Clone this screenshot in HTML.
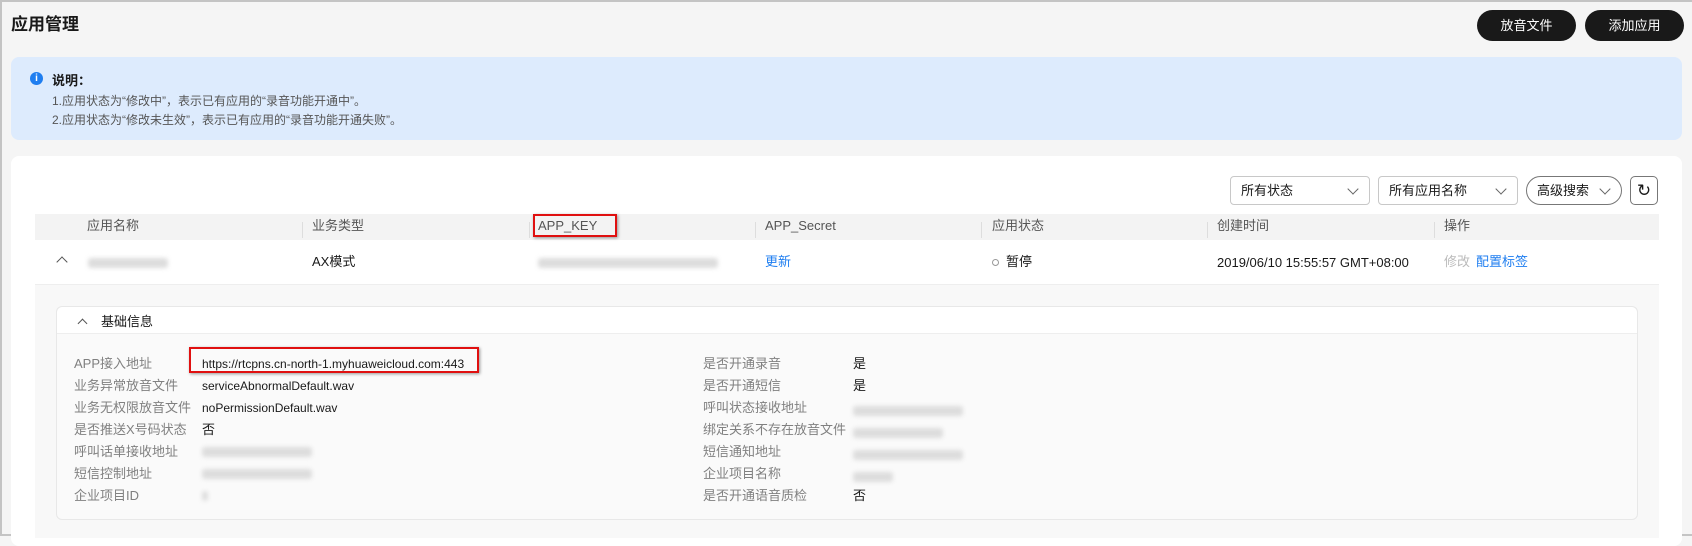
<!DOCTYPE html><html><head><meta charset="utf-8"><style>
*{margin:0;padding:0;box-sizing:border-box}
body{width:1692px;height:536px;overflow:hidden;background:#f5f5f5;font-family:"Liberation Sans","Noto Sans CJK SC",sans-serif;font-size:13px;color:#191919;position:relative;border:2px solid #c4c4c4;border-right:none}
.a{position:absolute;white-space:nowrap}
.btn{background:#191919;color:#fff;border-radius:16px;height:31px;line-height:31px;text-align:center;font-size:13px}
.sel{border:1px solid #c8c8c8;background:#fff;height:29px;line-height:27px;padding-left:10px;border-radius:4px}
.chev{position:absolute;right:12px;top:8px;width:8px;height:8px;border-right:1px solid #666;border-bottom:1px solid #666;transform:rotate(45deg)}
.hd{color:#555}
.sep{position:absolute;top:220px;width:1px;height:16px;background:#ddd}
.blur{background:#ddd;filter:blur(2px);height:10px;position:absolute;border-radius:3px}
.lb{color:#808080}
.lat{font-size:12px}
.red{position:absolute;border:2px solid #e01010;box-shadow:1px 1px 3px rgba(0,0,0,.4)}
</style></head><body>
<div class="a" style="left:9px;top:8px;font-size:17px;font-weight:bold">应用管理</div>
<div class="a btn" style="left:1475px;top:8px;width:99px">放音文件</div>
<div class="a btn" style="left:1583px;top:8px;width:99px">添加应用</div>
<div class="a" style="left:9px;top:55px;width:1671px;height:83px;background:#ddebfd;border-radius:8px"></div>
<div class="a" style="left:28px;top:70px;width:13px;height:13px;border-radius:50%;background:#1f7ef0;color:#fff;font-size:10px;line-height:13px;text-align:center;font-weight:bold">i</div>
<div class="a" style="left:50px;top:68px;font-weight:bold">说明：</div>
<div class="a" style="left:50px;top:90px;color:#555;font-size:12px">1.应用状态为“修改中”，表示已有应用的“录音功能开通中”。</div>
<div class="a" style="left:50px;top:109px;color:#555;font-size:12px">2.应用状态为“修改未生效”，表示已有应用的“录音功能开通失败”。</div>
<div class="a" style="left:9px;top:154px;width:1671px;height:390px;background:#fff;border-radius:8px"></div>
<div class="a sel" style="left:1228px;top:174px;width:140px">所有状态<span class="chev"></span></div>
<div class="a sel" style="left:1376px;top:174px;width:140px">所有应用名称<span class="chev"></span></div>
<div class="a sel" style="left:1524px;top:174px;width:96px;border-radius:15px;border-color:#777">高级搜索<span class="chev"></span></div>
<div class="a" style="left:1628px;top:174px;width:28px;height:29px;border:1px solid #777;border-radius:5px;text-align:center;line-height:27px;font-size:17px">&#8635;</div>
<div class="a" style="left:33px;top:212px;width:1624px;height:26px;background:#f3f3f3"></div>
<div class="a hd" style="left:85px;top:213px">应用名称</div>
<div class="a hd" style="left:310px;top:213px">业务类型</div>
<div class="a hd" style="left:536px;top:216px">APP_KEY</div>
<div class="a hd" style="left:763px;top:216px">APP_Secret</div>
<div class="a hd" style="left:990px;top:213px">应用状态</div>
<div class="a hd" style="left:1215px;top:213px">创建时间</div>
<div class="a hd" style="left:1442px;top:213px">操作</div>
<div class="sep" style="left:300px"></div><div class="sep" style="left:527px"></div><div class="sep" style="left:753px"></div><div class="sep" style="left:979px"></div><div class="sep" style="left:1205px"></div><div class="sep" style="left:1432px"></div>
<div class="red" style="left:531px;top:212px;width:84px;height:23px"></div>
<div class="a" style="left:56px;top:256px;width:8px;height:8px;border-left:1.5px solid #555;border-top:1.5px solid #555;transform:rotate(45deg)"></div>
<div class="blur" style="left:86px;top:256px;width:80px"></div>
<div class="a" style="left:310px;top:249px">AX模式</div>
<div class="blur" style="left:536px;top:256px;width:180px"></div>
<div class="a" style="left:763px;top:249px;color:#1f7ef0">更新</div>
<div class="a" style="left:990px;top:257px;width:7px;height:7px;border:1.5px solid #999;border-radius:50%"></div>
<div class="a" style="left:1004px;top:249px">暂停</div>
<div class="a" style="left:1215px;top:253px">2019/06/10 15:55:57 GMT+08:00</div>
<div class="a" style="left:1442px;top:249px;color:#bbb">修改</div>
<div class="a" style="left:1474px;top:249px;color:#1f7ef0">配置标签</div>
<div class="a" style="left:33px;top:282px;width:1624px;height:1px;background:#eee"></div>
<div class="a" style="left:33px;top:283px;width:1624px;height:253px;background:#f8f8f8"></div>
<div class="a" style="left:54px;top:304px;width:1582px;height:214px;background:#fafafa;border:1px solid #e8e8e8;border-radius:6px"></div>
<div class="a" style="left:55px;top:305px;width:1580px;height:27px;background:#fff;border-bottom:1px solid #eee;border-radius:6px 6px 0 0"></div>
<div class="a" style="left:77px;top:318px;width:7px;height:7px;border-left:1px solid #555;border-top:1px solid #555;transform:rotate(45deg)"></div>
<div class="a" style="left:99px;top:309px">基础信息</div>
<div class="a lb" style="left:72px;top:351px;line-height:22px">APP接入地址<br>业务异常放音文件<br>业务无权限放音文件<br>是否推送X号码状态<br>呼叫话单接收地址<br>短信控制地址<br>企业项目ID</div>
<div class="a lat" style="left:200px;top:351px;line-height:22px">https://rtcpns.cn-north-1.myhuaweicloud.com:443<br>serviceAbnormalDefault.wav<br>noPermissionDefault.wav<br><span style="font-size:13px">否</span></div>
<div class="blur" style="left:200px;top:445px;width:110px"></div>
<div class="blur" style="left:200px;top:467px;width:110px"></div>
<div class="blur" style="left:200px;top:489px;width:6px"></div>
<div class="red" style="left:187px;top:345px;width:290px;height:26px"></div>
<div class="a lb" style="left:701px;top:351px;line-height:22px">是否开通录音<br>是否开通短信<br>呼叫状态接收地址<br>绑定关系不存在放音文件<br>短信通知地址<br>企业项目名称<br>是否开通语音质检</div>
<div class="a" style="left:851px;top:351px;line-height:22px">是<br>是</div>
<div class="blur" style="left:851px;top:404px;width:110px"></div>
<div class="blur" style="left:851px;top:426px;width:90px"></div>
<div class="blur" style="left:851px;top:448px;width:110px"></div>
<div class="blur" style="left:851px;top:470px;width:40px"></div>
<div class="a" style="left:851px;top:483px">否</div>
</body></html>
